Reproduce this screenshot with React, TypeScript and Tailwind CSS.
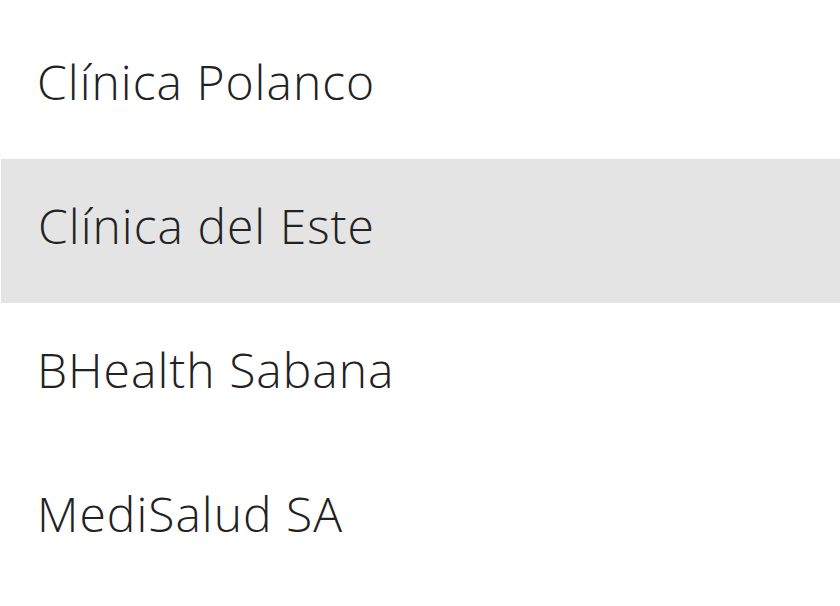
const items = ["Clínica Polanco", "Clínica del Este", "BHealth Sabana", "MediSalud SA"];

export default function App() {
  return (
    <div className="min-h-screen w-full bg-white pt-[15px]" style={{ fontFamily: "'Open Sans', Lato, sans-serif" }}>
      {items.map((name, i) => (
        <div
          key={name}
          className={`flex h-[144px] items-center pb-[10px] pl-[37px] text-[48px] font-light tracking-[1px] text-[#222] ${
            i === 1 ? "ml-px bg-[#e4e4e4]" : ""
          }`}
        >
          {name}
        </div>
      ))}
    </div>
  );
}
